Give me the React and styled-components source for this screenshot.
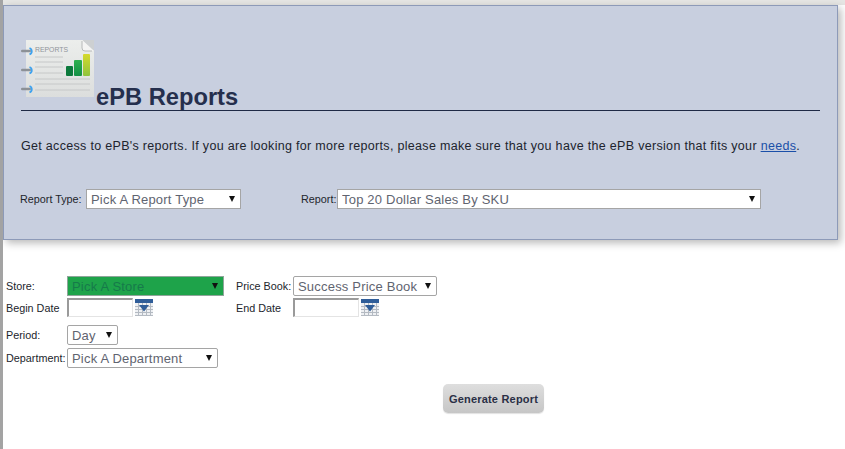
import React from 'react';
import styled, { createGlobalStyle } from 'styled-components';

const GlobalStyle = createGlobalStyle`
  html, body {
    margin: 0;
    padding: 0;
    background: #fff;
    overflow: hidden;
  }
  body {
    font-family: "Liberation Sans", Arial, sans-serif;
  }
`;

const Page = styled.div`
  width: 845px;
  height: 449px;
  box-sizing: border-box;
  border-left: 3px solid #a3a3a3;
  background: linear-gradient(#e6e6e4 0, #e6e6e4 5px, #fff 5px);
  padding-top: 5px;
  overflow: hidden;
`;

const Panel = styled.section`
  width: 835px;
  height: 235px;
  box-sizing: border-box;
  background: #c8cfdf;
  border: 1px solid #8d9ab8;
  box-shadow: 3px 3px 8px rgba(0, 0, 0, 0.28);
  padding: 33px 17px 0 17px;
`;

const Header = styled.div`
  display: flex;
  align-items: flex-end;
  height: 71px;
  border-bottom: 1px solid #1f2a45;
`;

const ReportIcon = styled.svg`
  display: block;
  width: 74px;
  height: 60px;
  margin-bottom: 11px;
  flex: none;
`;

const Title = styled.h1`
  margin: 0 0 0 1px;
  font-size: 23.7px;
  line-height: 26px;
  font-weight: 700;
  color: #252f4d;
`;

const Intro = styled.p`
  margin: 27px 0 0;
  font-size: 12.5px;
  line-height: 16px;
  letter-spacing: 0.31px;
  color: #20242e;
  white-space: nowrap;
  a {
    color: #1a4fa8;
  }
`;

const FilterRow = styled.div`
  display: flex;
  align-items: center;
  margin-top: 35px;
  margin-left: -1px;
`;

const Label = styled.label`
  font-size: 10.8px;
  color: #22252c;
  white-space: nowrap;
  width: ${(p) => (p.$width ? `${p.$width}px` : 'auto')};
  margin-left: ${(p) => p.$left || 0}px;
  flex: none;
`;

const SelectWrap = styled.div`
  position: relative;
  flex: none;
  width: ${(p) => p.$width}px;
  height: 20px;
`;

const Select = styled.select`
  appearance: none;
  display: block;
  width: 100%;
  height: 100%;
  margin: 0;
  padding: 0 0 0 4px;
  box-sizing: border-box;
  border: 1px solid ${(p) => (p.$green ? '#8fa59a' : '#a5a5a5')};
  border-radius: ${(p) => (p.$round ? 2 : 0)}px;
  background: ${(p) => (p.$green ? '#1ea34a' : '#fff')};
  color: ${(p) => (p.$green ? '#167a4a' : '#5f6470')};
  font-family: "Liberation Sans", Arial, sans-serif;
  font-size: 13px;
  letter-spacing: 0.2px;
`;

const Arrow = styled.span`
  position: absolute;
  top: 50%;
  right: 6px;
  margin-top: -3px;
  width: 0;
  height: 0;
  border-left: 3.5px solid transparent;
  border-right: 3.5px solid transparent;
  border-top: 6px solid #111;
  pointer-events: none;
`;

const Form = styled.div`
  padding: 36px 0 0 3px;
  display: flex;
  flex-direction: column;
`;

const Row = styled.div`
  display: flex;
  align-items: center;
  margin-top: ${(p) => p.$top || 0}px;
`;

const DateInput = styled.input`
  display: block;
  width: 66px;
  height: 19px;
  box-sizing: border-box;
  margin: 0 2px 0 0;
  padding: 0 2px;
  border-style: solid;
  border-width: 2px 1px 1px 2px;
  border-color: #9a9a9a #e4e4e4 #e4e4e4 #9a9a9a;
  background: #fff;
  flex: none;
`;

const CalendarIcon = styled.svg`
  display: block;
  width: 18px;
  height: 17px;
  flex: none;
`;

const ButtonRow = styled.div`
  display: flex;
  padding: 16px 0 0 437px;
`;

const GenerateButton = styled.button`
  width: 101px;
  height: 29px;
  padding: 0;
  border: 0;
  border-radius: 5px;
  background: linear-gradient(#dedede, #c6c6c6);
  box-shadow: 0 1px 1px rgba(0, 0, 0, 0.12);
  color: #2a2f45;
  font-family: "Liberation Sans", Arial, sans-serif;
  font-size: 11px;
  font-weight: 700;
  letter-spacing: 0.2px;
`;

const Calendar = () => (
  <CalendarIcon viewBox="0 0 18 17">
    <rect x="0" y="0" width="18" height="17" fill="#eef0f3" />
    <rect x="0" y="0" width="18" height="4" fill="#2f5d99" />
    <path d="M0 7.5H18M0 10.5H18M0 13.5H18M0 16.5H18M3.5 4V17M7.5 4V17M11.5 4V17M15.5 4V17" stroke="#b4bac2" strokeWidth="1" fill="none" />
    <path d="M4 6H14L9 12.5Z" fill="#2f5d99" />
  </CalendarIcon>
);

const Notebook = () => (
  <ReportIcon viewBox="0 0 74 60">
    <defs>
      <linearGradient id="sheet" x1="0" y1="0" x2="0" y2="1">
        <stop offset="0" stopColor="#eceeec" />
        <stop offset="1" stopColor="#dcdedd" />
      </linearGradient>
      <linearGradient id="barTall" x1="0" y1="0" x2="0" y2="1">
        <stop offset="0" stopColor="#d6d92c" />
        <stop offset="1" stopColor="#8fc43e" />
      </linearGradient>
      <linearGradient id="barMid" x1="0" y1="0" x2="0" y2="1">
        <stop offset="0" stopColor="#2fb04f" />
        <stop offset="1" stopColor="#129045" />
      </linearGradient>
    </defs>
    <rect x="5" y="1" width="68" height="57" fill="url(#sheet)" />
    <path d="M61 1H73V12Z" fill="#cdd0d2" />
    <path d="M61 1V9Q61 12 64 12H73Z" fill="#f4f4f3" />
    <path d="M61 2V9Q61 12 64 12H71" fill="none" stroke="#a8abab" strokeWidth="0.8" />
    <text x="14" y="13" fontFamily="Liberation Sans, sans-serif" fontSize="8" fill="#90949a" textLength="33" lengthAdjust="spacingAndGlyphs">REPORTS</text>
    <path d="M14 18H42M14 23H42M14 28H42M14 34H42M14 40H69M14 45H69M14 51H69" stroke="#c6c8c8" strokeWidth="1" />
    <rect x="45" y="27" width="7" height="10" rx="1" fill="#0c7a3c" />
    <rect x="53" y="21" width="8" height="16" rx="1" fill="url(#barMid)" />
    <rect x="62" y="15" width="7" height="22" rx="1" fill="url(#barTall)" />
    {[11, 30, 49].map((y) => (
      <g key={y}>
        <rect x="0" y={y - 0.3} width="10" height="2.6" rx="1.3" fill="#8c9196" />
        <path d={`M8.5 ${y - 2}a3.4 3.4 0 0 1 0 6.4`} fill="none" stroke="#3ea2ee" strokeWidth="1.8" />
      </g>
    ))}
  </ReportIcon>
);

const Dropdown = ({ width, options, green, round }) => (
  <SelectWrap $width={width}>
    <Select $green={green} $round={round} defaultValue={options[0]}>
      {options.map((o) => (
        <option key={o}>{o}</option>
      ))}
    </Select>
    <Arrow />
  </SelectWrap>
);

export default function App() {
  return (
    <>
      <GlobalStyle />
      <Page>
        <Panel>
          <Header>
            <Notebook />
            <Title>ePB Reports</Title>
          </Header>
          <Intro>
            Get access to ePB's reports. If you are looking for more reports, please make sure that you have the ePB version that fits your <a href="#needs">needs</a>.
          </Intro>
          <FilterRow>
            <Label $width={66}>Report Type:</Label>
            <Dropdown width={155} options={['Pick A Report Type']} />
            <Label $width={36} $left={60}>Report:</Label>
            <Dropdown width={424} options={['Top 20 Dollar Sales By SKU']} />
          </FilterRow>
        </Panel>
        <Form>
          <Row>
            <Label $width={61}>Store:</Label>
            <Dropdown width={157} options={['Pick A Store']} green />
            <Label $width={57} $left={12}>Price Book:</Label>
            <Dropdown width={144} options={['Success Price Book']} round />
          </Row>
          <Row $top={2}>
            <Label $width={61}>Begin Date</Label>
            <DateInput />
            <Calendar />
            <Label $width={57} $left={83}>End Date</Label>
            <DateInput />
            <Calendar />
          </Row>
          <Row $top={8}>
            <Label $width={61}>Period:</Label>
            <Dropdown width={51} options={['Day']} round />
          </Row>
          <Row $top={3}>
            <Label $width={61}>Department:</Label>
            <Dropdown width={151} options={['Pick A Department']} round />
          </Row>
          <ButtonRow>
            <GenerateButton>Generate Report</GenerateButton>
          </ButtonRow>
        </Form>
      </Page>
    </>
  );
}
